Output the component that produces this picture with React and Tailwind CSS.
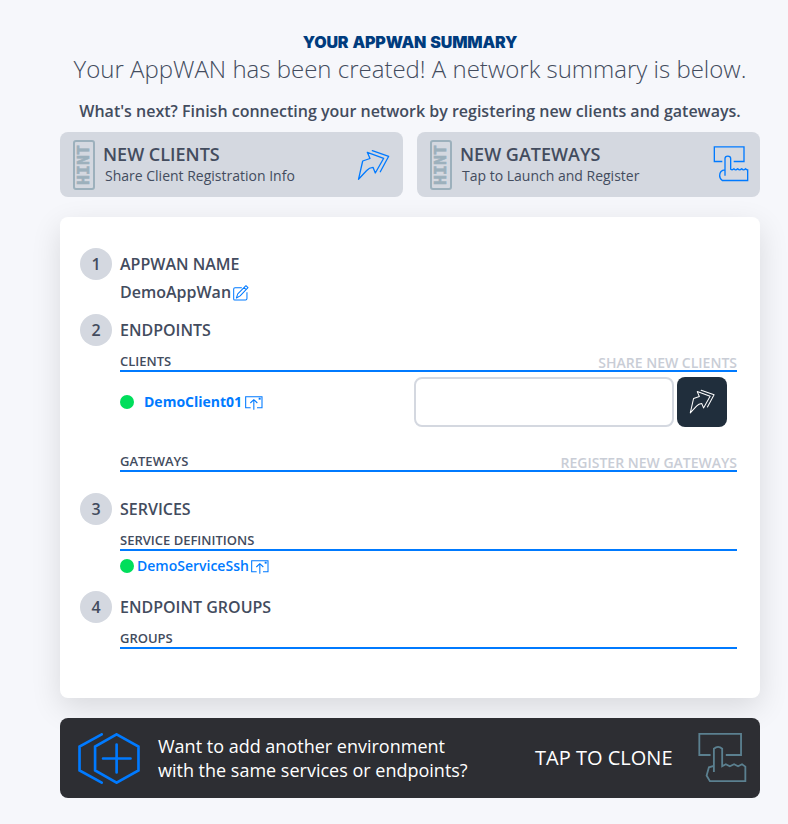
import React from "react";

function ShareArrow({ className, strokeWidth = 1.3 }) {
  return (
    <svg viewBox="0 0 34 33" className={className} fill="none" stroke="currentColor" strokeWidth={strokeWidth} strokeLinejoin="round" strokeLinecap="round">
      <path d="M1.5 30.3L5.7 12L13 9.5L10.3 3.3L26.7 9.3L18.3 24L16 18.3C13 18.5 11 20 9.7 21.5Z" />
      <path d="M15.3 1.7L31.7 7.3L23.3 22.7" />
    </svg>
  );
}

function TapSmall({ className }) {
  return (
    <svg viewBox="38 46 108 110" className={className} fill="none" stroke="currentColor" strokeWidth="4">
      <path d="M66 95H42V51H131V95H100" />
      <path d="M74 138V86Q74 79 82.5 79Q91 79 91 86V118Q96 122 101 117Q106 123 112 117Q118 123 124 117Q130 123 135 117Q138 120 142 120V152H66Q57 144 58 137Q58 121 74 120" />
    </svg>
  );
}

function TapLarge({ className }) {
  return (
    <svg viewBox="54 48 148 151" className={className} fill="none" stroke="currentColor" strokeWidth="5.5">
      <path d="M92 116H58V52H184V116H138" />
      <path d="M102 167V97Q115 86 127 97V150L138 144L150 150L163 144L175 150L187 144L197 151V195H90L80 178L87 153L102 149" />
    </svg>
  );
}

function WindowIcon({ className }) {
  return (
    <svg viewBox="404 153 54 42" className={className} fill="none" stroke="currentColor" strokeWidth="3.2">
      <path d="M421 188H406V155H455V188H440" />
      <path d="M430.5 194V164M420 174L430.5 164L441 174" />
      <path d="M445 161H451" strokeWidth="6" />
    </svg>
  );
}

function EditIcon({ className }) {
  return (
    <svg viewBox="488 138 47 47" className={className} fill="none" stroke="currentColor" strokeWidth="3" strokeLinejoin="round">
      <path d="M514 146H494Q490 146 490 150V179Q490 182 493 182H525Q529 182 529 178V159" />
      <path d="M498 176L502 164L526 140L532 146L509 170ZM520 145L527 152" />
    </svg>
  );
}

function HintCard({ title, sub, children }) {
  return (
    <div className="flex h-[65px] w-[343px] rounded-lg bg-[#d4d8e0] pt-2 pl-[13px]">
      <div className="flex h-[50px] w-[22px] items-center justify-center rounded-[3px] border-2 border-[#9cb0bc]">
        <span className="-rotate-90 font-['DejaVu_Sans_Mono',monospace] text-[16.5px] leading-4 font-bold text-[#9cb0bc] [-webkit-text-stroke:0.6px_#9cb0bc]">HINT</span>
      </div>
      <div className="ml-2 flex-1 whitespace-nowrap">
        <div className="mt-0.5 text-[18px] leading-6 font-semibold">{title}</div>
        <div className="pl-0.5 text-[14px] leading-[19px]">{sub}</div>
      </div>
      {children}
    </div>
  );
}

function Step({ n, title }) {
  return (
    <div className="flex h-8 items-center gap-2 font-semibold">
      <div className="flex size-8 items-center justify-center rounded-full bg-[#d4d8e0]">{n}</div>
      <div>{title}</div>
    </div>
  );
}

function Subhead({ title, action }) {
  return (
    <div className="ml-10 flex h-[21px] w-[617px] justify-between border-b-2 border-[#007aff] text-[13px] leading-[20px] font-semibold">
      <span>{title}</span>
      <span className="mt-0.5 text-[14px] text-[#c9cdd6]">{action}</span>
    </div>
  );
}

export default function App() {
  return (
    <div className="h-[824px] w-[788px] overflow-hidden bg-[#f6f7fb] pt-[30px] pl-[60px] font-['Open_Sans',sans-serif] text-[#434c5e]">
      <div className="w-[700px]">
        <header className="text-center whitespace-nowrap">
          <h1 className="h-[23px] font-['Inter',sans-serif] text-[16px] leading-6 font-black tracking-[-0.15px] text-[#003c7e] [word-spacing:1px]">YOUR APPWAN SUMMARY</h1>
          <p className="h-8 text-[24px] leading-8 font-light">Your AppWAN has been created! A network summary is below.</p>
          <p className="mt-[14px] h-6 text-[16px] leading-6 font-semibold">What's next? Finish connecting your network by registering new clients and gateways.</p>
        </header>

        <div className="mt-[9px] flex justify-between">
          <HintCard title="NEW CLIENTS" sub="Share Client Registration Info">
            <ShareArrow className="mt-[9px] mr-3 h-[33px] w-[34px] text-[#007aff]" />
          </HintCard>
          <HintCard title="NEW GATEWAYS" sub="Tap to Launch and Register">
            <TapSmall className="mt-[5px] mr-[11.5px] h-[37px] w-9 text-[#007aff]" />
          </HintCard>
        </div>

        <main className="mt-5 h-[481px] rounded-lg bg-white px-5 pt-[31px] shadow-[0_10px_30px_rgba(0,0,0,0.12)]">
          <Step n="1" title="APPWAN NAME" />
          <div className="mb-[10px] ml-10 flex h-6 items-center font-semibold">
            DemoAppWan
            <EditIcon className="mt-0.5 ml-0.5 size-4 text-[#007aff]" />
          </div>
          <Step n="2" title="ENDPOINTS" />
          <div className="mt-[5px]">
            <Subhead title="CLIENTS" action="SHARE NEW CLIENTS" />
          </div>
          <div className="mt-[5px] ml-10 flex h-[50px] items-center">
            <span className="size-3.5 rounded-full bg-[#00de5b]" />
            <span className="mb-0.5 ml-2.5 text-[14px] font-bold text-[#007aff]">DemoClient01</span>
            <WindowIcon className="mt-px ml-[2.5px] h-3.5 w-[18px] text-[#007aff]" />
            <input className="ml-auto h-[50px] w-[260px] rounded-lg border-2 border-[#d4d8e0] bg-white" />
            <button className="mr-[13px] ml-[3px] flex size-[50px] items-center justify-center rounded-lg bg-[#202e3c] text-white">
              <ShareArrow className="h-[26px] w-[27px]" strokeWidth={1.3} />
            </button>
          </div>
          <div className="mt-6">
            <Subhead title="GATEWAYS" action="REGISTER NEW GATEWAYS" />
          </div>
          <div className="mt-[21px]"><Step n="3" title="SERVICES" /></div>
          <div className="mt-[5px]"><Subhead title="SERVICE DEFINITIONS" /></div>
          <div className="mt-[5px] ml-10 flex h-5 items-center text-[14px] font-semibold text-[#007aff]">
            <span className="size-3.5 rounded-full bg-[#00de5b]" />
            <span className="mb-0.5 ml-[3px]">DemoServiceSsh</span>
            <WindowIcon className="mt-px ml-[2.5px] h-3.5 w-[18px]" />
          </div>
          <div className="mt-[15px]"><Step n="4" title="ENDPOINT GROUPS" /></div>
          <div className="mt-[5px]"><Subhead title="GROUPS" /></div>
        </main>

        <footer className="relative mt-5 flex h-20 rounded-lg bg-[#2d2e33] text-white">
          <svg viewBox="53 38 186 154" className="mt-[15px] ml-[17.7px] h-[51px] w-[62px]" fill="none" stroke="#007aff" strokeWidth="8" strokeLinecap="round">
            <path d="M169 42L235 79V151L169 188L104 151V79ZM124 42L57 79V151L124 188M169 73V157M128 115H211" />
          </svg>
          <p className="mt-4 ml-[18.3px] text-[18px] leading-6 whitespace-nowrap">Want to add another environment<br />with the same services or endpoints?</p>
          <span className="mt-[26px] ml-auto text-[20px] leading-7 whitespace-nowrap">TAP TO CLONE</span>
          <TapLarge className="mt-[13.5px] mr-[13px] ml-[25.5px] h-[51px] w-[49px] text-[#5b8090]" />
        </footer>
      </div>
    </div>
  );
}
